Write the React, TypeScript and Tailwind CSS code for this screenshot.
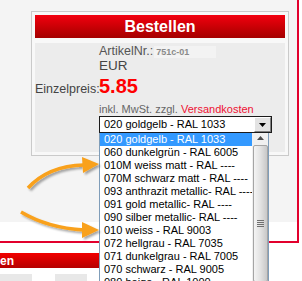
import React from "react";

const colours = [
  "020 goldgelb - RAL 1033",
  "060 dunkelgrün - RAL 6005",
  "010M weiss matt - RAL ----",
  "070M schwarz matt - RAL ----",
  "093 anthrazit metallic- RAL ----",
  "091 gold metallic- RAL ----",
  "090 silber metallic- RAL ----",
  "010 weiss - RAL 9003",
  "072 hellgrau - RAL 7035",
  "071 dunkelgrau - RAL 7005",
  "070 schwarz - RAL 9005",
  "080 beige - RAL 1000",
];

const Arrows = () => (
  <svg className="absolute left-0 top-0 pointer-events-none" width="302" height="281" viewBox="0 0 302 281">
    <defs>
      <filter id="shadow" x="-20%" y="-20%" width="140%" height="140%">
        <feDropShadow dx="2" dy="2" stdDeviation="1.2" floodColor="#000" floodOpacity="0.35" />
      </filter>
    </defs>
    <g filter="url(#shadow)" fill="#f9a11b" stroke="#f9a11b">
      <path d="M28 188 Q48 166 84 165" fill="none" strokeWidth="3.5" />
      <polygon points="82,157 99,164 83,173" stroke="none" />
      <path d="M21 212 Q48 228 84 230" fill="none" strokeWidth="3.5" />
      <polygon points="82,222 99,230 82,238" stroke="none" />
    </g>
  </svg>
);

export default function App() {
  const selected = 0;

  return (
    <div className="relative w-[302px] h-[281px] overflow-hidden bg-white font-['Liberation_Sans',Arial,sans-serif] text-[#444]">
      <div className="w-[299px] h-[243px] border-r-2 border-b-2 border-[#e2002d]">
        <div className="h-[222px] bg-[#f4f4f4] pt-[11px] pl-[31px]">
          <div className="w-[258px] h-[145px] border border-[#cacaca] bg-[#f8f8f8] p-[3px]">
            <div className="h-[23px] bg-linear-to-b from-[#f3000f] to-[#a50000] text-white font-bold text-[16px] leading-[23px] text-center">
              Bestellen
            </div>
            <div className="mt-[5px] h-[109px] bg-[#ececec] pt-[1px]">
              <div className="ml-[64px] flex h-[14px] text-[12.5px] leading-[14px] text-[#555]">
                <span>ArtikelNr.:</span>
                <span className="ml-[1px] mt-[2px] h-[12px] w-[62px] bg-[#f3f3f3] pl-[2px] text-[9px] leading-[12px] font-bold text-[#8a8a8a]">
                  751c-01
                </span>
              </div>
              <div className="ml-[64px] h-[16px] text-[13.5px] leading-[16px] text-[#444]">EUR</div>
              <div className="mt-[1px] flex h-[22px] items-baseline">
                <span className="w-[64px] text-[12.5px] text-[#444]">Einzelpreis:</span>
                <span className="text-[20px] leading-[22px] font-bold text-[#ff0000]">5.85</span>
              </div>
              <div className="ml-[64px] mt-[5px] h-[14px] text-[11px] leading-[14px] text-[#666] whitespace-nowrap">
                inkl. MwSt. zzgl. <span className="text-[#ee1133]">Versandkosten</span>
              </div>
              <div className="ml-[64px] flex h-[17px] w-[173px] border border-[#1b1b1b] bg-white">
                <div className="flex-1 pl-[4px] text-[11px] leading-[15px] text-black whitespace-nowrap">
                  {colours[selected]}
                </div>
                <div className="flex h-[15px] w-[17px] items-center justify-center border border-t-white border-l-white border-r-[#808080] border-b-[#808080] bg-[#e3e3e3]">
                  <svg width="7" height="4" viewBox="0 0 7 4">
                    <polygon points="0,0 7,0 3.5,4" fill="#000" />
                  </svg>
                </div>
              </div>
            </div>
          </div>
        </div>
      </div>

      <div className="mt-[10px] h-[15px] w-[160px] bg-linear-to-b from-[#f20000] to-[#b50000] pt-[1px] text-[12px] leading-[15px] font-bold text-white">
        en
      </div>
      <div className="mt-[6px] flex">
        <div className="h-[10px] w-[32px] bg-[#e8e8e8]" />
        <div className="ml-[23px] h-[10px] w-[32px] bg-[#e8e8e8]" />
      </div>

      {/* open dropdown list */}
      <div className="absolute left-[99px] top-[133px] flex h-[150px] w-[170px] border-x border-b border-[#7f9db9] bg-white">
        <div className="w-[152px]">
          {colours.map((c, i) => (
            <div
              key={c}
              className={
                i === selected
                  ? "h-[13px] pl-[4px] text-[11px] leading-[13px] whitespace-nowrap bg-[#3399ff] text-white"
                  : "h-[13px] pl-[4px] text-[11px] leading-[13px] whitespace-nowrap text-black"
              }
            >
              {c}
            </div>
          ))}
        </div>
        <div className="flex w-[16px] flex-col bg-[#f0f0f0]">
          <div className="flex h-[16px] items-center justify-center">
            <svg width="7" height="4" viewBox="0 0 7 4">
              <polygon points="0,4 7,4 3.5,0" fill="#4d4d4d" />
            </svg>
          </div>
          <div className="ml-[1px] mt-[2px] h-[170px] w-[15px] rounded-[2px] border border-[#a5a5a5] bg-linear-to-r from-[#f4f4f4] via-[#e2e2e2] to-[#c8c8c8] pt-[74px]">
            <div className="mx-auto flex w-[7px] flex-col gap-[1px]">
              <div className="h-[1px] bg-[#707070]" />
              <div className="h-[1px] bg-[#707070]" />
              <div className="h-[1px] bg-[#707070]" />
              <div className="h-[1px] bg-[#707070]" />
            </div>
          </div>
        </div>
      </div>

      <Arrows />
    </div>
  );
}
